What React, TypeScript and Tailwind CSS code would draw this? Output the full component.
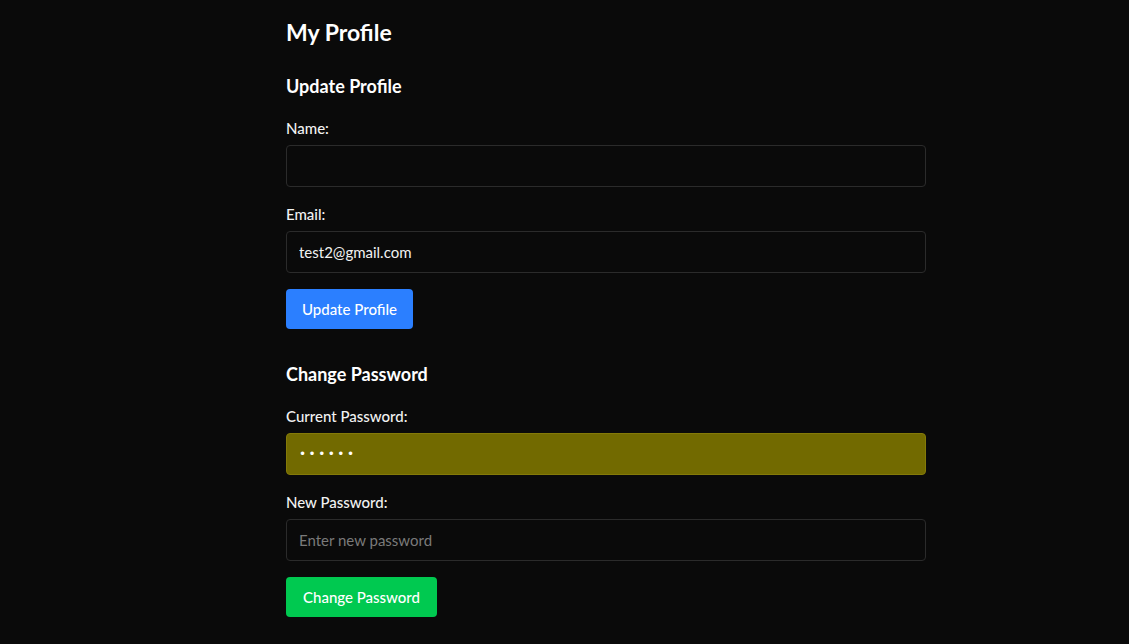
import React from "react";

const font = { fontFamily: "Lato, 'Noto Sans', sans-serif" };

function Field({ label, last, children }: { label: string; last?: boolean; children: React.ReactNode }) {
  return (
    <div className={last ? "mb-4" : "mb-[17px]"}>
      <label className="block text-[15px] leading-5 font-medium text-[#f2f2f2] mb-[7px]">{label}</label>
      {children}
    </div>
  );
}

export default function App() {
  return (
    <div className="min-h-[644px] w-full bg-[#0a0a0a] text-white" style={font}>
      <div className="w-[640px] ml-[286px] pt-4">
        <h1 className="text-[23px] leading-8 font-bold mb-6">My Profile</h1>

        <section className="mb-[31px]">
          <h2 className="text-lg leading-7 font-bold mb-[18px]">Update Profile</h2>
          <Field label="Name:">
            <input
              type="text"
              className="block w-full h-[42px] rounded bg-[#0a0a0a] border border-[#2b2b2b] px-3 text-[15px] text-[#f2f2f2] outline-none"
            />
          </Field>
          <Field label="Email:" last>
            <input
              type="email"
              defaultValue="test2@gmail.com"
              className="block w-full h-[42px] rounded bg-[#0a0a0a] border border-[#2b2b2b] px-3 text-[15px] text-[#f2f2f2] outline-none"
            />
          </Field>
          <button className="h-10 w-[127px] rounded bg-[#2b7fff] text-[15px] font-medium text-white">
            Update Profile
          </button>
        </section>

        <section>
          <h2 className="text-lg leading-7 font-bold mb-[18px]">Change Password</h2>
          <Field label="Current Password:">
            <input
              type="password"
              defaultValue="123456"
              className="block w-full h-[42px] rounded bg-[#726a00] border border-[#847a08] px-3 text-[12px] tracking-[2.5px] text-white outline-none"
              style={{ fontFamily: "'DejaVu Sans', sans-serif" }}
            />
          </Field>
          <Field label="New Password:" last>
            <input
              type="password"
              placeholder="Enter new password"
              className="block w-full h-[42px] rounded bg-[#0a0a0a] border border-[#2b2b2b] px-3 text-[15px] text-[#f2f2f2] placeholder:text-[#7a7a7a] outline-none"
            />
          </Field>
          <button className="h-10 w-[151px] rounded bg-[#00c950] text-[15px] font-medium text-white">
            Change Password
          </button>
        </section>
      </div>
    </div>
  );
}
